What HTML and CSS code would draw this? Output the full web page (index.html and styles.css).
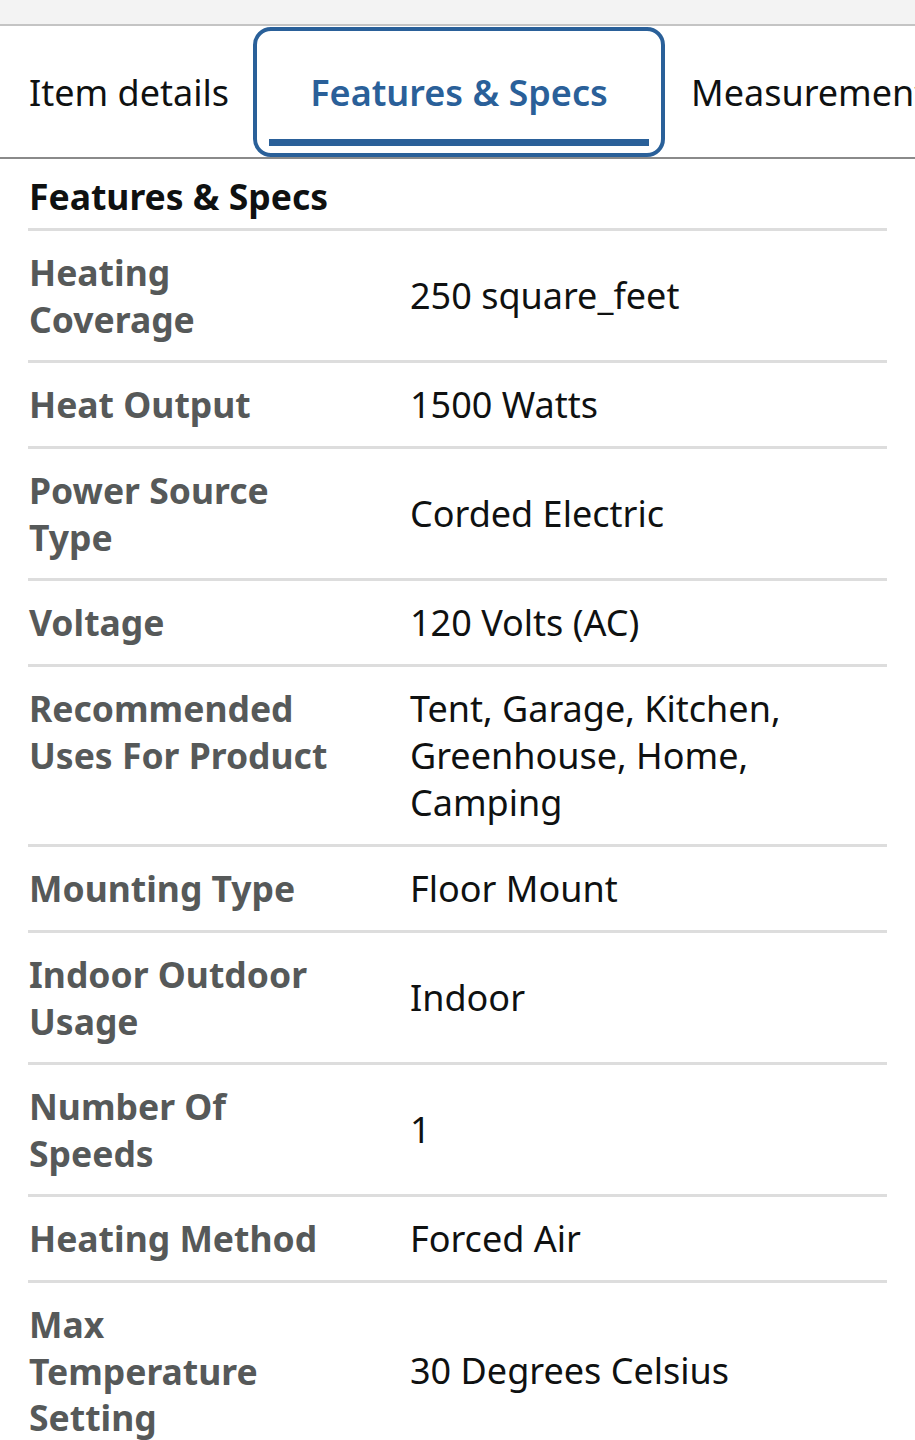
FILE: index.html
```html
<!DOCTYPE html>
<html lang="en">
<head>
<meta charset="utf-8">
<title>Features &amp; Specs</title>
<link rel="stylesheet" href="styles.css">
</head>
<body>
<div class="topbar"></div>
<nav class="tabs">
  <div class="tab">Item details</div>
  <div class="tab tab-active"><span class="tab-label">Features &amp; Specs</span><span class="tab-underline"></span></div>
  <div class="tab">Measurements</div>
</nav>
<section class="specs">
  <h2 class="specs-title">Features &amp; Specs</h2>
  <div class="row"><div class="label">Heating Coverage</div><div class="value">250 square_feet</div></div>
  <div class="row"><div class="label">Heat Output</div><div class="value">1500 Watts</div></div>
  <div class="row"><div class="label">Power Source Type</div><div class="value">Corded Electric</div></div>
  <div class="row"><div class="label">Voltage</div><div class="value">120 Volts (AC)</div></div>
  <div class="row"><div class="label">Recommended Uses For Product</div><div class="value">Tent, Garage, Kitchen, Greenhouse, Home, Camping</div></div>
  <div class="row"><div class="label">Mounting Type</div><div class="value">Floor Mount</div></div>
  <div class="row"><div class="label">Indoor Outdoor Usage</div><div class="value">Indoor</div></div>
  <div class="row"><div class="label">Number Of Speeds</div><div class="value">1</div></div>
  <div class="row"><div class="label">Heating Method</div><div class="value">Forced Air</div></div>
  <div class="row"><div class="label">Max Temperature Setting</div><div class="value">30 Degrees Celsius</div></div>
</section>
</body>
</html>
```
FILE: styles.css
```css
html, body {
  margin: 0;
  padding: 0;
  background: #ffffff;
}
body {
  font-family: "Noto Sans", "Open Sans", sans-serif;
  color: #0f1111;
  font-size: 36px;
  line-height: 47px;
  overflow: hidden;
}
.topbar {
  height: 24px;
  background: #f3f3f3;
  border-bottom: 2px solid #c4c4c4;
}
.tabs {
  display: flex;
  align-items: stretch;
  height: 131px;
  border-bottom: 2px solid #8a8a8a;
  white-space: nowrap;
  overflow: hidden;
  padding-left: 29px;
  gap: 24px;
}
.tab {
  display: flex;
  align-items: center;
  font-weight: 400;
  color: #0f1111;
  flex: none;
}
.tab-active {
  position: relative;
  box-sizing: border-box;
  width: 412px;
  margin-top: 1px;
  height: 130px;
  border: 4px solid #2a6099;
  border-radius: 18px;
  justify-content: center;
  color: #2a6099;
  font-weight: 600;
}
.tab-label {
  margin-top: 0;
}
.tab-underline {
  position: absolute;
  left: 12px;
  right: 12px;
  bottom: 7px;
  height: 7px;
  background: #2a6099;
}
.tab-active + .tab {
  margin-left: 2px;
}
.tab:first-child,
.tab:last-child {
  padding-top: 2px;
}
.specs {
  padding: 0 28px;
}
.specs-title {
  margin: 0;
  font-size: 35.5px;
  font-weight: 700;
  line-height: 47px;
  padding: 14px 1px 8px;
  border-bottom: 3px solid #dddddd;
  color: #0f1111;
}
.row {
  display: flex;
  padding: 18px 0 18px;
  border-bottom: 3px solid #dddddd;
  align-items: center;
}
.label {
  align-self: flex-start;
  width: 302px;
  padding-left: 1px;
  margin-right: 79px;
  font-size: 35.5px;
  line-height: 46.5px;
  font-weight: 700;
  color: #565959;
  flex: none;
}
.value {
  flex: 1;
  color: #0f1111;
}
```
